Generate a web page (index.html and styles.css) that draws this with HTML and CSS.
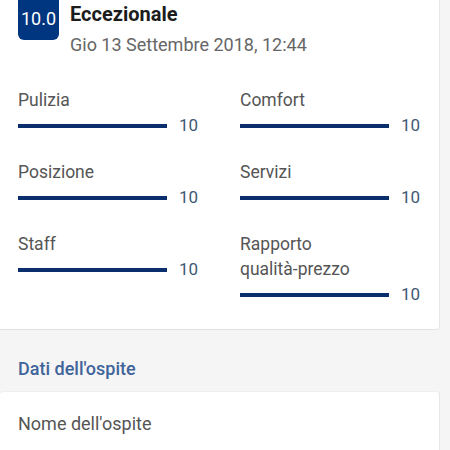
FILE: index.html
```html
<!DOCTYPE html>
<html>
<head>
<meta charset="utf-8">
<link rel="stylesheet" href="styles.css">
</head>
<body>
<div class="page">
  <div class="card review">
    <div class="header">
      <div class="badge">10.0</div>
      <div class="head-text">
        <div class="title">Eccezionale</div>
        <div class="date">Gio 13 Settembre 2018, 12:44</div>
      </div>
    </div>
    <div class="grid">
      <div class="item"><div class="label">Pulizia</div><div class="bar-row"><span class="bar"></span><span class="score">10</span></div></div>
      <div class="item"><div class="label">Comfort</div><div class="bar-row"><span class="bar"></span><span class="score">10</span></div></div>
      <div class="item"><div class="label">Posizione</div><div class="bar-row"><span class="bar"></span><span class="score">10</span></div></div>
      <div class="item"><div class="label">Servizi</div><div class="bar-row"><span class="bar"></span><span class="score">10</span></div></div>
      <div class="item"><div class="label">Staff</div><div class="bar-row"><span class="bar"></span><span class="score">10</span></div></div>
      <div class="item"><div class="label">Rapporto<br>qualità-prezzo</div><div class="bar-row"><span class="bar"></span><span class="score">10</span></div></div>
    </div>
  </div>
  <div class="section-title">Dati dell'ospite</div>
  <div class="card guest">
    <div class="field">Nome dell'ospite</div>
  </div>
</div>
</body>
</html>
```

FILE: styles.css
```css
html, body {
  margin: 0;
  padding: 0;
  background: #f5f5f5;
  font-family: Roboto, "Noto Sans", sans-serif;
  overflow: hidden;
}
.page {
  width: 450px;
  height: 450px;
  overflow: hidden;
}
.card {
  width: 440px;
  background: #fff;
  border-right: 1px solid #e6e6e6;
  border-bottom: 1px solid #e2e2e2;
  border-radius: 0 0 4px 0;
  box-sizing: border-box;
}
.review {
  margin-top: -6px;
  padding: 0 0 22px 18px;
}
.header {
  display: flex;
  gap: 11px;
}
.badge {
  width: 41px;
  height: 46px;
  background: #003580;
  color: #fff;
  border-radius: 6px;
  font-size: 18px;
  display: flex;
  align-items: center;
  justify-content: center;
  padding-top: 2px;
  box-sizing: border-box;
}
.head-text {
  padding-top: 8px;
}
.title {
  font-size: 20px;
  font-weight: 700;
  color: #1c1c1c;
  line-height: 24px;
}
.date {
  font-size: 18px;
  color: #666;
  line-height: 24px;
  margin-top: 7px;
}
.grid {
  display: grid;
  grid-template-columns: 222px 200px;
  row-gap: 22px;
  margin-top: 31px;
}
.label {
  font-size: 17.5px;
  color: #555;
  line-height: 25px;
}
.bar-row {
  display: flex;
  align-items: center;
  height: 25px;
  gap: 12px;
}
.bar {
  width: 149px;
  height: 4px;
  background: #0a2f6c;
}
.score {
  font-size: 17px;
  color: #3f5873;
  line-height: 25px;
}
.section-title {
  font-size: 18px;
  font-weight: 500;
  color: #40649a;
  padding: 27px 0 0 18px;
  line-height: 24px;
  height: 34px;
}
.guest {
  border-radius: 4px 4px 0 0;
  padding: 20px 18px 40px;
  border-top: 1px solid #eee;
}
.field {
  font-size: 18px;
  color: #555;
  line-height: 24px;
}
```
